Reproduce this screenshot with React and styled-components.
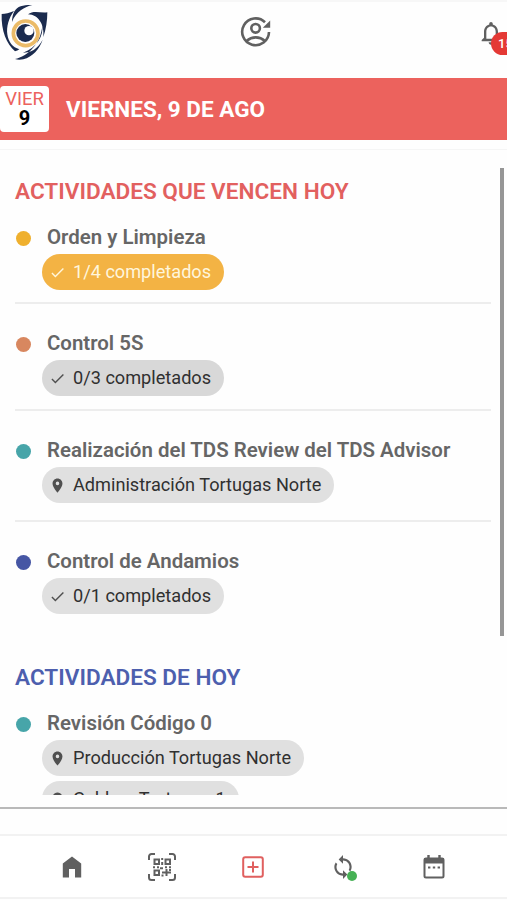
import React from "react";
import styled, { createGlobalStyle, css } from "styled-components";
import { MdCheck, MdPlace, MdSync, MdNotificationsNone } from "react-icons/md";

const colors = {
  red: "#ec625d",
  blue: "#4d5fae",
  grey: "#606060",
};

const GlobalStyle = createGlobalStyle`
  * {
    box-sizing: border-box;
  }
  body {
    margin: 0;
    background-color: #fefefe;
    font-family: Roboto, "Liberation Sans", sans-serif;
  }
`;

const Screen = styled.div`
  width: 507px;
  height: 900px;
  overflow: hidden;
  display: flex;
  flex-direction: column;
`;

const TopBar = styled.header`
  height: 78px;
  flex-shrink: 0;
  display: grid;
  grid-template-columns: 1fr 32px 1fr;
  border-top: 2px solid #f7f7f7;
  color: ${colors.grey};
`;

const LogoIcon = styled.svg`
  width: 50px;
  height: 60px;
  margin-top: -2px;
`;

const UserIcon = styled.svg`
  width: 32px;
  height: 32px;
  margin: 14px 0 0 2px;
`;

const Bell = styled.div`
  position: relative;
  justify-self: end;
  width: 30px;
  margin-top: 17px;
  font-size: 28px;
  svg {
    display: block;
  }
`;

const BellBadge = styled.span`
  position: absolute;
  top: 13px;
  left: 14px;
  width: 30px;
  height: 23px;
  padding-left: 7px;
  border-radius: 12px;
  background-color: #e43935;
  color: #fff;
  font-size: 13px;
  font-weight: 500;
  line-height: 23px;
`;

const DateBanner = styled.div`
  height: 62px;
  flex-shrink: 0;
  display: flex;
  align-items: center;
  gap: 17px;
  background-color: ${colors.red};
`;

const DayBox = styled.div`
  width: 49px;
  height: 46px;
  border-radius: 4px;
  background-color: #fff;
  display: flex;
  flex-direction: column;
  align-items: center;
  padding-top: 4px;
  font-size: 18.5px;
  line-height: 19px;
  color: ${colors.red};
  strong {
    color: #000;
    font-size: 20px;
    line-height: 18px;
  }
`;

const BannerTitle = styled.h1`
  margin: 0;
  color: #fff;
  font-size: 22.5px;
  font-weight: 700;
`;

const Panel = styled.main`
  height: 660px;
  flex-shrink: 0;
  margin-top: 9px;
  padding-top: 1px;
  border-top: 1px solid #f5f5f5;
  border-bottom: 2px solid #b9b9b9;
  background-color: #fefefe;
  display: flex;
  justify-content: space-between;
`;

const Activities = styled.div`
  width: 491px;
  height: 644px;
  padding: 25px 0 0 15px;
  overflow: hidden;
`;

const ScrollThumb = styled.div`
  width: 4px;
  height: 468px;
  margin: 17px 3px 0 0;
  background-color: #969696;
`;

const SectionTitle = styled.h2`
  margin: 0 0 18px;
  color: ${({ $color }) => $color};
  font-size: 22.6px;
  font-weight: 600;
  line-height: 31px;
  white-space: nowrap;
`;

const Section = styled.section`
  & + & {
    margin-top: 48px;
  }
`;

const Activity = styled.article`
  display: grid;
  grid-template-columns: 32px 1fr;
  padding-bottom: ${({ $gap }) => $gap}px;
  & + & {
    padding-top: 27px;
    border-top: 2px solid #ededed;
  }
`;

const Dot = styled.span`
  width: 15px;
  height: 15px;
  margin: 6px 0 0 1px;
  border-radius: 50%;
  background-color: ${({ $color }) => $color};
`;

const ActivityTitle = styled.h3`
  margin: 0;
  color: #666;
  font-size: 20.45px;
  font-weight: 600;
  line-height: 24px;
  white-space: nowrap;
`;

const Chips = styled.div`
  display: flex;
  flex-direction: column;
  align-items: flex-start;
  gap: 5px;
  margin: 5px 0 0 -5px;
`;

const Chip = styled.div`
  height: 36px;
  display: flex;
  align-items: center;
  gap: 7px;
  padding: 0 13px 2px 7px;
  border-radius: 18px;
  background-color: #e0e0e0;
  color: #303030;
  font-size: 18.15px;
  white-space: nowrap;
  svg {
    font-size: 17px;
    color: #505050;
    position: relative;
    top: 1px;
  }
  ${({ $tone }) =>
    $tone === "warning" &&
    css`
      background-color: #f3b344;
      color: #fff6dc;
      svg {
        color: #fff6dc;
      }
    `}
  ${({ $tone }) =>
    $tone === "dark" &&
    css`
      background-color: #d8d8d8;
    `}
`;

const NavBar = styled.nav`
  height: 65px;
  flex-shrink: 0;
  margin-top: 25px;
  padding-right: 2px;
  border-top: 2px solid #f2f2f2;
  border-bottom: 2px solid #f2f2f2;
  background-color: #fff;
  display: grid;
  grid-template-columns: repeat(5, 90.5px);
  justify-content: center;
  align-items: center;
  justify-items: center;
  color: ${colors.grey};
`;

const NavItem = styled.div`
  position: relative;
  display: flex;
  font-size: 26px;
  color: ${({ $active }) => ($active ? "#e0605f" : "inherit")};
`;

const OnlineDot = styled.span`
  position: absolute;
  right: -1px;
  bottom: -1px;
  width: 10px;
  height: 10px;
  border-radius: 50%;
  background-color: #46b155;
`;

function Logo() {
  return (
    <LogoIcon viewBox="0 0 150 180">
      <g fill="#1b2b4e">
        <path d="M5 42C16 42 28 39 42 33C26 54 19 80 22 103C25 126 38 142 58 148C54 151 50 153 45 154C20 132 3 92 5 42Z" />
        <path d="M97 15C74 20 48 35 36 66C36 41 46 24 62 19C74 15 87 14 97 15Z" />
        <path d="M84 43C101 30 121 40 142 37C142 62 138 88 130 111C134 77 117 44 84 43Z" />
        <path d="M127 75C131 108 111 143 69 158C91 158 113 148 128 119C118 148 98 170 70 178C62 180 52 180 45 177C83 169 123 132 127 75Z" />
      </g>
      <circle cx="77" cy="100" r="37" fill="#fff" stroke="#ebbb68" strokeWidth="11" />
      <circle cx="76" cy="99" r="27" fill="#1b2b4e" />
      <circle cx="87" cy="92" r="14" fill="#fff" />
    </LogoIcon>
  );
}

function UserRefresh() {
  return (
    <UserIcon viewBox="0 0 32 32" fill="none" stroke="currentColor" strokeWidth="2.6">
      <path d="M25 6.2A13.4 13.4 0 1 0 29 16" />
      <path d="M30.2 4.5V11.8H22.8Z" fill="currentColor" stroke="none" />
      <circle cx="15.6" cy="12.3" r="4.3" />
      <path d="M6.5 25C12 20.2 19.5 20.2 25 25" />
    </UserIcon>
  );
}

function HomeIcon() {
  return (
    <svg width="20" height="22" viewBox="0 0 20 22" fill="currentColor">
      <path d="M10 0.5L19.2 7.5V21.5H13V13H7V21.5H0.8V7.5Z" />
    </svg>
  );
}

function QrIcon() {
  return (
    <svg width="28" height="28" viewBox="0 0 28 28" fill="none" stroke="currentColor" strokeWidth="2">
      <path d="M1 7V3.5A2.5 2.5 0 0 1 3.5 1H7M21 1H24.5A2.5 2.5 0 0 1 27 3.5V7M27 21V24.5A2.5 2.5 0 0 1 24.5 27H21M7 27H3.5A2.5 2.5 0 0 1 1 24.5V21" />
      <path d="M6.5 6.5H11V11H6.5ZM17.5 6.5H22V11H17.5ZM6.5 17.5H11V22H6.5Z" />
      <path d="M14.2 5V7M14.2 9V12M5 14.2H7M9 14.2H11M12 15.2H15M17 14.2H19M21 14.2H23M14 19.5H23M18.5 16V23M13.5 22.5H15.5M21 17H23" />
    </svg>
  );
}

function AddIcon() {
  return (
    <svg width="22" height="22" viewBox="0 0 22 22" fill="none" stroke="currentColor" strokeWidth="2">
      <rect x="1.2" y="1.2" width="19.6" height="19.6" rx="2" />
      <path d="M11 5.5V16.5M5.5 11H16.5" />
    </svg>
  );
}

function CalendarIcon() {
  return (
    <svg width="22" height="24" viewBox="0 0 22 24" fill="none" stroke="currentColor" strokeWidth="2">
      <rect x="1.5" y="3.5" width="19" height="19" rx="1.5" />
      <path d="M1 3H21V8.5H1Z" fill="currentColor" stroke="none" />
      <path d="M5.5 0V4M16.5 0V4" strokeWidth="2.4" />
      <path d="M5 12.5H7.4M9.8 12.5H12.2M14.6 12.5H17" />
    </svg>
  );
}

const sections = [
  {
    title: "ACTIVIDADES QUE VENCEN HOY",
    color: "#e2605f",
    activities: [
      {
        title: "Orden y Limpieza",
        color: "#efb02e",
        gap: 12,
        chips: [{ label: "1/4 completados", icon: MdCheck, tone: "warning" }],
      },
      {
        title: "Control 5S",
        color: "#d8875f",
        gap: 13,
        chips: [{ label: "0/3 completados", icon: MdCheck, tone: "dark" }],
      },
      {
        title: "Realización del TDS Review del TDS Advisor",
        color: "#47a5a9",
        gap: 17,
        chips: [{ label: "Administración Tortugas Norte", icon: MdPlace }],
      },
      {
        title: "Control de Andamios",
        color: "#4656a4",
        gap: 0,
        chips: [{ label: "0/1 completados", icon: MdCheck }],
      },
    ],
  },
  {
    title: "ACTIVIDADES DE HOY",
    color: colors.blue,
    activities: [
      {
        title: "Revisión Código 0",
        color: "#47a5a9",
        gap: 0,
        chips: [
          { label: "Producción Tortugas Norte", icon: MdPlace },
          { label: "Caldera Tortugas 1", icon: MdPlace },
        ],
      },
    ],
  },
];

export default function App() {
  return (
    <>
      <GlobalStyle />
      <Screen>
        <TopBar>
          <Logo />
          <UserRefresh />
          <Bell>
            <MdNotificationsNone />
            <BellBadge>15</BellBadge>
          </Bell>
        </TopBar>
        <DateBanner>
          <DayBox>
            VIER
            <strong>9</strong>
          </DayBox>
          <BannerTitle>VIERNES, 9 DE AGO</BannerTitle>
        </DateBanner>
        <Panel>
          <Activities>
            {sections.map((section) => (
              <Section key={section.title}>
                <SectionTitle $color={section.color}>{section.title}</SectionTitle>
                {section.activities.map((activity) => (
                  <Activity key={activity.title} $gap={activity.gap}>
                    <Dot $color={activity.color} />
                    <div>
                      <ActivityTitle>{activity.title}</ActivityTitle>
                      <Chips>
                        {activity.chips.map(({ label, icon: Icon, tone }) => (
                          <Chip key={label} $tone={tone}>
                            <Icon />
                            {label}
                          </Chip>
                        ))}
                      </Chips>
                    </div>
                  </Activity>
                ))}
              </Section>
            ))}
          </Activities>
          <ScrollThumb />
        </Panel>
        <NavBar>
          <NavItem>
            <HomeIcon />
          </NavItem>
          <NavItem>
            <QrIcon />
          </NavItem>
          <NavItem $active>
            <AddIcon />
          </NavItem>
          <NavItem>
            <MdSync />
            <OnlineDot />
          </NavItem>
          <NavItem>
            <CalendarIcon />
          </NavItem>
        </NavBar>
      </Screen>
    </>
  );
}
